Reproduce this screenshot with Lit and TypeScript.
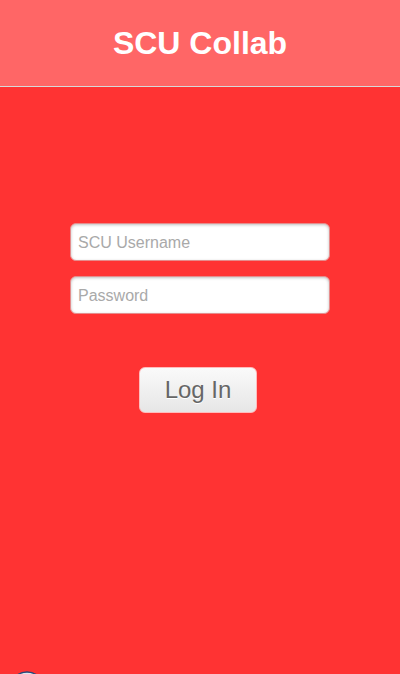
import { LitElement, html, css } from "lit";
import { customElement } from "lit/decorators.js";

@customElement("app-root")
export class AppRoot extends LitElement {
  static styles = css`
    :host {
      display: flex;
      flex-direction: column;
      min-height: 100vh;
      position: relative;
      overflow: hidden;
      background: #ff3333;
      font-family: "Liberation Sans", Arial, sans-serif;
    }
    .header {
      box-sizing: border-box;
      height: 87px;
      display: flex;
      align-items: center;
      justify-content: center;
      background: #ff6666;
      border-bottom: 1px solid #d8d8d8;
    }
    .title {
      margin: 0;
      font-size: 32px;
      line-height: 40px;
      font-weight: bold;
      color: #fff;
    }
    .form {
      display: flex;
      flex-direction: column;
      align-items: center;
      padding: 136px 70px 32px;
      gap: 15px;
    }
    .field {
      box-sizing: border-box;
      width: 100%;
      height: 38px;
      margin: 0;
      padding: 2px 7px 0;
      border: 1px solid #e58c8c;
      border-radius: 6px;
      background: #fff;
      box-shadow: inset 0 1px 3px rgba(0, 0, 0, 0.25);
      color: #333;
      font: 16px/20px "Liberation Sans", Arial, sans-serif;
      outline: none;
    }
    .field::placeholder {
      color: #a9a9a9;
      opacity: 1;
    }
    .submit {
      box-sizing: border-box;
      height: 46px;
      margin: 38px 4px 0 0;
      padding: 0 25px;
      border: 1px solid #ffbcbc;
      border-radius: 6px;
      background: linear-gradient(#fafafa, #e6e6e6);
      color: #666;
      text-shadow: 0 1px 0 #fff;
      font: 24px/28px "Liberation Sans", Arial, sans-serif;
    }
    .badge {
      position: absolute;
      left: 9px;
      bottom: -33px;
      width: 36px;
      height: 36px;
    }
  `;

  render() {
    return html`
      <header class="header"><h1 class="title">SCU Collab</h1></header>
      <form class="form" @submit=${(e: Event) => e.preventDefault()}>
        <input class="field" type="text" aria-label="SCU Username" placeholder="SCU Username" />
        <input class="field" type="password" aria-label="Password" placeholder="Password" />
        <button class="submit" type="submit">Log In</button>
      </form>
      <svg class="badge" viewBox="0 0 36 36" aria-hidden="true">
        <circle cx="18" cy="18" r="17" fill="#dce6ee" stroke="#284878" stroke-width="1.5" />
      </svg>
    `;
  }
}
